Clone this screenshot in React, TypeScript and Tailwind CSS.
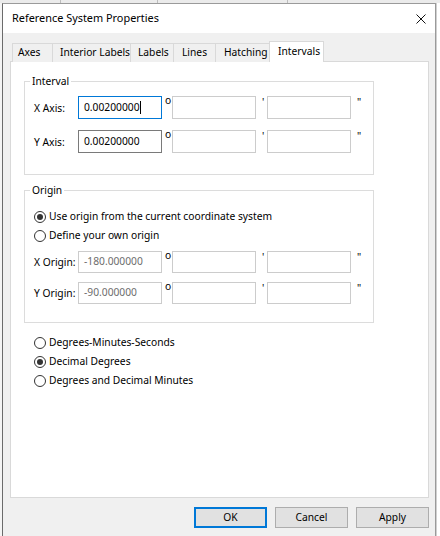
import React from 'react';

type BoxKind = 'focus' | 'enabled' | 'disabled';

const boxBorder: Record<BoxKind, string> = {
  focus: 'border-[#0078d7]',
  enabled: 'border-[#7a7a7a]',
  disabled: 'border-[#cccccc]',
};

function Box({ value, kind, tall, caret }: { value?: string; kind: BoxKind; tall?: boolean; caret?: boolean }) {
  return (
    <div
      className={`w-[84px] ${tall ? 'h-[23px]' : 'h-[22px]'} border ${boxBorder[kind]} bg-white flex items-center pl-[5px] ${
        kind === 'disabled' && value ? 'text-[#6d6d6d]' : 'text-black'
      }`}
    >
      {value}
      {caret && <span className="w-px h-[13px] bg-black" />}
    </div>
  );
}

function DmsRow({
  label,
  value,
  kind,
  tall,
  caret,
}: {
  label: string;
  value: string;
  kind: BoxKind;
  tall?: boolean;
  caret?: boolean;
}) {
  return (
    <div className="flex items-center">
      <span className="w-[44px] whitespace-nowrap pt-[2px]">{label}</span>
      <Box value={value} kind={kind} tall={tall} caret={caret} />
      <span className="w-[10px] pl-[3px] self-start -mt-[3px] leading-[14px]">o</span>
      <Box kind="disabled" tall={tall} />
      <span className="w-[11px] pl-[6px] self-start -mt-[1px] leading-[14px]">'</span>
      <Box kind="disabled" tall={tall} />
      <span className="pl-[6px] self-start -mt-[1px] leading-[14px]">"</span>
    </div>
  );
}

function Radio({ checked, label }: { checked?: boolean; label: string }) {
  return (
    <div className="flex items-center h-[19px] whitespace-nowrap">
      <span className="w-[12px] h-[12px] rounded-full border border-[#333333] bg-white flex items-center justify-center">
        {checked && <span className="w-[6px] h-[6px] rounded-full bg-[#333333]" />}
      </span>
      <span className="ml-[3px]">{label}</span>
    </div>
  );
}

const tabs = [
  { name: 'Axes', w: 'w-[40px] pl-[5px]' },
  { name: 'Interior Labels', w: 'w-[78px] pl-[7px]' },
  { name: 'Labels', w: 'w-[43px] pl-[7px]' },
  { name: 'Lines', w: 'w-[42px] pl-[8px]' },
  { name: 'Hatching', w: 'w-[54px] pl-[8px]' },
];

export default function App() {
  return (
    <div className="w-[440px] h-[536px] overflow-hidden bg-white flex flex-col font-['Noto_Sans',sans-serif] text-[10.25px] text-black">
      {/* window behind */}
      <div className="h-[3px] bg-[#ebebeb] flex">
        <div className="w-[61px] border-r border-[#bdbdbd]" />
        <div className="w-[97px] border-r border-[#bdbdbd]" />
        <div className="w-[130px] border-r border-[#bdbdbd]" />
      </div>

      <div className="flex flex-1 min-h-0">
        <div className="w-[2px] bg-[#f4f4f4]" />

        {/* dialog */}
        <div className="w-[434px] flex flex-col border-l border-t border-r border-l-[#6b6b6b] border-t-[#9a9a9a] border-r-[#9a9a9a]">
          <div className="h-[29px] bg-white flex items-center justify-between pl-[9px] pr-[9px]">
            <span className="text-[10.9px] whitespace-nowrap">Reference System Properties</span>
            <svg width="10" height="10" viewBox="0 0 10 10">
              <path d="M0.5 0.5 L9.5 9.5 M9.5 0.5 L0.5 9.5" stroke="#111" strokeWidth="1" fill="none" />
            </svg>
          </div>

          <div className="flex-1 bg-[#f0f0f0] pl-[7px] pr-[6px] pt-[8px]">
            {/* tabs */}
            <div className="flex items-end ml-[2px] h-[21px] -mb-px relative z-10 whitespace-nowrap">
              {tabs.map((t) => (
                <div
                  key={t.name}
                  className={`${t.w} h-[19px] border-l border-t border-[#d9d9d9] bg-[#f0f0f0] flex items-center`}
                >
                  {t.name}
                </div>
              ))}
              <div className="w-[55px] h-[21px] border-l border-t border-r border-[#d9d9d9] bg-white flex items-center pl-[8px]">
                Intervals
              </div>
            </div>

            {/* tab page */}
            <div className="h-[437px] border border-[#d9d9d9] bg-white pl-[13px] pt-[11px]">
              <fieldset className="w-[350px] border border-[#dcdcdc] pl-[9px] pt-[7px] pb-[21px]">
                <legend className="-ml-[4px] px-[2px] leading-[16px]">Interval</legend>
                <div className="flex flex-col gap-[11px]">
                  <DmsRow label="X Axis:" value="0.00200000" kind="focus" tall caret />
                  <DmsRow label="Y Axis:" value="0.00200000" kind="enabled" tall />
                </div>
              </fieldset>

              <fieldset className="w-[350px] mt-[7px] border border-[#dcdcdc] pl-[9px] pt-[9px] pb-[18px]">
                <legend className="-ml-[4px] px-[2px] leading-[16px]">Origin</legend>
                <Radio checked label="Use origin from the current coordinate system" />
                <Radio label="Define your own origin" />
                <div className="flex flex-col gap-[9px] mt-[6px]">
                  <DmsRow label="X Origin:" value="-180.000000" kind="disabled" />
                  <DmsRow label="Y Origin:" value="-90.000000" kind="disabled" />
                </div>
              </fieldset>

              <div className="mt-[10px] pl-[10px]">
                <Radio label="Degrees-Minutes-Seconds" />
                <Radio checked label="Decimal Degrees" />
                <Radio label="Degrees and Decimal Minutes" />
              </div>
            </div>

            {/* buttons */}
            <div className="flex justify-end gap-[8px] mt-[9px]">
              <button className="w-[73px] h-[21px] border-2 border-[#0078d7] bg-[#e1e1e1]">OK</button>
              <button className="w-[73px] h-[21px] border border-[#adadad] bg-[#e1e1e1]">Cancel</button>
              <button className="w-[73px] h-[21px] border border-[#adadad] bg-[#e1e1e1]">Apply</button>
            </div>
          </div>
        </div>

        <div className="flex-1 bg-white border-l border-[#d0d0d0]" />
      </div>
    </div>
  );
}
